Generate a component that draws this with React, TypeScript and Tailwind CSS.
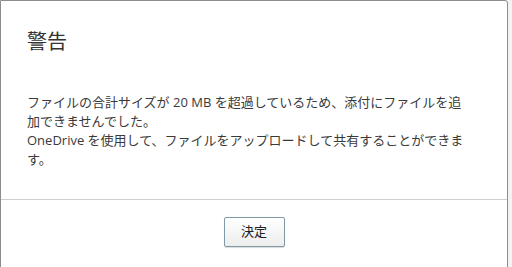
export default function App() {
  const font = { fontFamily: '"Open Sans", "Noto Sans CJK JP", sans-serif' }
  return (
    <div className="h-[267px] w-[512px] overflow-hidden bg-[#f3f3f3]" style={font}>
      <div className="flex h-[280px] w-[508px] flex-col rounded-tr-[3px] border border-[#8c8c8c] bg-white">
        {/* Title */}
        <div className="px-[26px] pt-[27px]">
          <h1 className="text-[20px] leading-[28px] font-normal text-[#333]">警告</h1>
        </div>

        {/* Message */}
        <div className="px-[26px] pt-[37px] text-[13px] leading-[19px] text-[#3a3a3a]">
          <p>ファイルの合計サイズが 20 MB を超過しているため、添付にファイルを追</p>
          <p>加できませんでした。</p>
          <p>OneDrive を使用して、ファイルをアップロードして共有することができま</p>
          <p>す。</p>
        </div>

        {/* Footer */}
        <div className="mt-[30px] flex justify-center border-t border-[#cfcfcf] pt-[17px]">
          <button className="h-[30px] w-[61px] rounded-[2px] border border-[#7f9aa6] bg-gradient-to-b from-white to-[#ededed] text-[13px] text-[#222] shadow-[0_1px_1px_rgba(0,0,0,0.15)]">
            決定
          </button>
        </div>
      </div>
    </div>
  )
}
